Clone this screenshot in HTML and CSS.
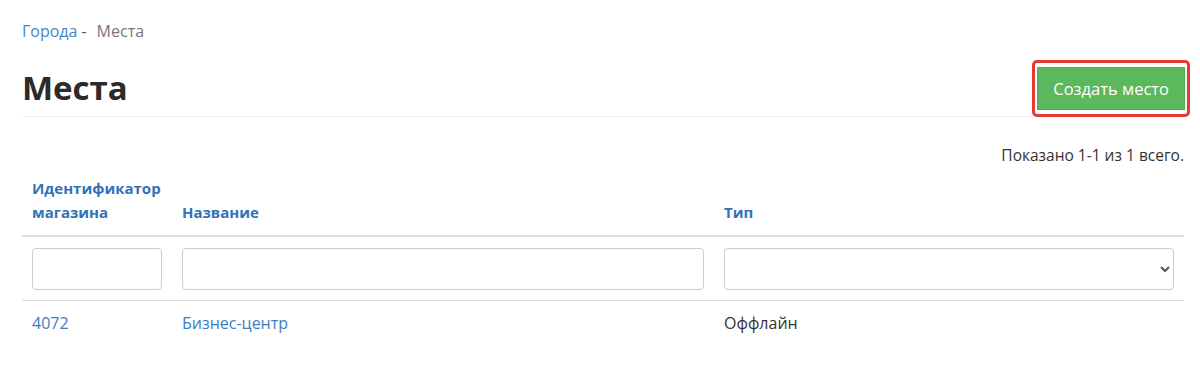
FILE: index.html
```html
<!DOCTYPE html>
<html lang="ru">
<head>
<meta charset="utf-8">
<title>Места</title>
<link rel="stylesheet" href="styles.css">
</head>
<body>
<div class="page">
  <ul class="breadcrumb">
    <li><a href="#">Города</a></li>
    <li class="sep">-</li>
    <li class="active">Места</li>
  </ul>
  <div class="title-row">
    <h1>Места</h1>
    <span class="highlight"><a class="btn-success" href="#">Создать место</a></span>
  </div>
  <div class="summary">Показано <b>1-1</b> из <b>1</b> всего.</div>
  <table class="grid">
    <colgroup>
      <col class="c1"><col class="c2"><col class="c3">
    </colgroup>
    <thead>
      <tr>
        <th><a href="#">Идентификатор магазина</a></th>
        <th><a href="#">Название</a></th>
        <th><a href="#">Тип</a></th>
      </tr>
      <tr class="filters">
        <td><input class="form-control" type="text"></td>
        <td><input class="form-control" type="text"></td>
        <td><select class="form-control"><option></option><option>Оффлайн</option></select></td>
      </tr>
    </thead>
    <tbody>
      <tr>
        <td><a href="#">4072</a></td>
        <td><a href="#">Бизнес-центр</a></td>
        <td>Оффлайн</td>
      </tr>
    </tbody>
  </table>
</div>
</body>
</html>
```

FILE: styles.css
```css
* { box-sizing: border-box; }
html, body { margin: 0; padding: 0; background: #fff; }
body {
  font-family: "Open Sans", "Liberation Sans", sans-serif;
  font-size: 16px;
  line-height: 24px;
  color: #333;
}
a { color: #337ab7; text-decoration: none; }
.page { padding: 19px 16px 0 22px; }

.breadcrumb {
  list-style: none;
  margin: 0;
  padding: 0;
  display: flex;
  align-items: baseline;
  font-size: 16px;
}
.breadcrumb a { color: #4a84c2; }
.breadcrumb .sep { padding: 0 10px 0 4px; color: #555; }
.breadcrumb .active { color: #777; }

.title-row {
  display: flex;
  justify-content: space-between;
  align-items: flex-end;
  border-bottom: 1px solid #eee;
  margin-top: 17px;
}
.title-row h1 {
  margin: 0 0 8px;
  font-size: 33px;
  line-height: 40px;
  font-weight: 700;
  color: #2b2b2b;
}
.highlight {
  display: inline-block;
  border: 3px solid #e53935;
  border-radius: 5px;
  padding: 4px 2px;
  background: #fff;
  margin-bottom: -1px;
  margin-right: -6px;
}
.btn-success {
  display: block;
  background: #5cb85c;
  border: 1px solid #4cae4c;
  color: #fff;
  font-size: 16.5px;
  line-height: 24px;
  padding: 9px 15px 8px;
}

.summary { text-align: right; margin-top: 26px; font-size: 15.5px; }
.summary b { font-weight: 400; }

.grid { width: 100%; border-collapse: collapse; margin-top: -1px; }
.grid col.c1 { width: 150px; }
.grid col.c2 { width: 542px; }
.grid th {
  text-align: left;
  vertical-align: bottom;
  padding: 10px 10px 11px;
  border-bottom: 2px solid #ddd;
  font-weight: 700;
  font-size: 15px;
}
.grid th a { color: #2f72b8; }
.grid td {
  padding: 10px;
  vertical-align: top;
}
.grid tr.filters td { border-bottom: 1px solid #ddd; padding-top: 11px; }
.grid tbody a { color: #3d7dc0; }

.form-control {
  display: block;
  width: 100%;
  height: 42px;
  padding: 6px 12px;
  font: inherit;
  color: #555;
  background: #fff;
  border: 1px solid #ccc;
  border-radius: 4px;
}
```
